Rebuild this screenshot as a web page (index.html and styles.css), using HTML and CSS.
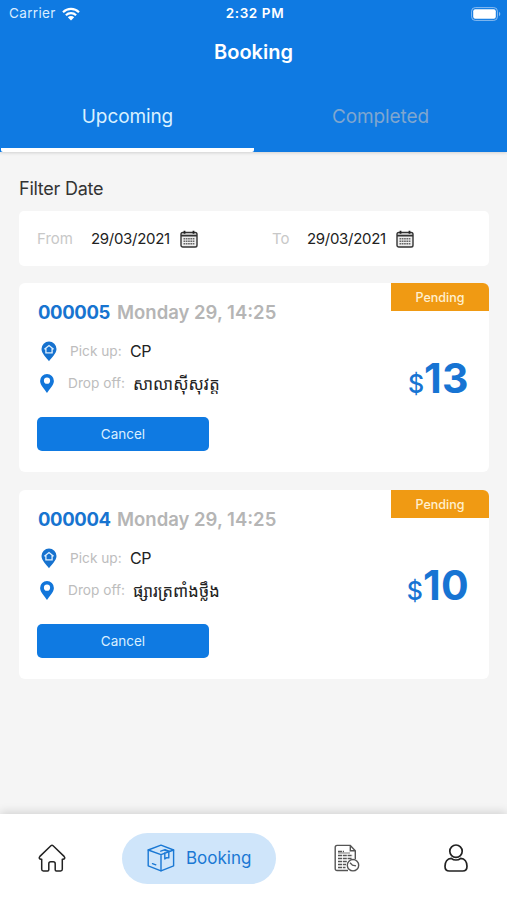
FILE: index.html
```
<!DOCTYPE html>
<html lang="en">
<head>
    <meta charset="UTF-8">
    <meta name="viewport" content="width=device-width, initial-scale=1.0">
    <title>Booking</title>
    <link rel="stylesheet" href="styles.css">
</head>
<body>
    <!-- shared icons -->
    <svg class="sprite" width="0" height="0">
        <symbol id="calendar" viewBox="0 0 18 18">
            <rect x="1" y="2.5" width="16" height="14.5" rx="1.8" fill="#eee" stroke="#333" stroke-width="1.4"/>
            <path d="M1 5.6h16" stroke="#333" stroke-width="1.8"/>
            <path d="M4.5 .8v3M13.5 .8v3" stroke="#222" stroke-width="1.8"/>
            <path d="M3.5 8.8h11M3.5 11.3h11M3.5 13.8h11" stroke="#666" stroke-width="1.4" stroke-dasharray="1.7 .6"/>
        </symbol>
        <symbol id="pin-home" viewBox="0 0 16 21">
            <path d="M8 .5A7.5 7.5 0 0 1 15.5 8c0 4.6-5.4 9.3-7.5 12.3C5.9 17.3.5 12.6.5 8A7.5 7.5 0 0 1 8 .5z" fill="#1672cf"/>
            <path d="M3.4 8.3L8 4.5l4.6 3.8M4.9 7.500v4.300h6.200V7.500" fill="none" stroke="#dff0ff" stroke-width="1.3"/>
        </symbol>
        <symbol id="pin" viewBox="0 0 14 19">
            <path d="M7 0a6.900 6.900 0 0 1 6.900 6.900C13.900 11 9 15.500 7 19 5 15.500.1 11 .1 6.900A6.900 6.900 0 0 1 7 0z" fill="#1276da"/>
            <circle cx="7" cy="6.7" r="3.1" fill="#fff"/>
        </symbol>
    </svg>

    <header class="header">
        <div class="status">
            <div class="carrier">
                <span>Carrier</span>
                <svg class="wifi" viewBox="0 0 18 14">
                    <path d="M1 5.200a11.500 11.500 0 0 1 16 0M3.900 8.200a7.300 7.300 0 0 1 10.200 0" fill="none" stroke="#fff" stroke-width="2.2"/>
                    <path d="M9 13.600l-3.200-3.400a4.600 4.600 0 0 1 6.400 0z" fill="#fff"/>
                </svg>
            </div>
            <div class="time">2:32 PM</div>
            <svg class="battery" viewBox="0 0 30 14">
                <rect x=".6" y=".6" width="25.8" height="12.8" rx="3.6" fill="none" stroke="#8abcf0" stroke-width="1"/>
                <rect x="2.2" y="2.2" width="22.6" height="9.6" rx="2" fill="#fff"/>
                <path d="M28 4.800v4.400c1.800-.8 1.800-3.600 0-4.400z" fill="#8abcf0"/>
            </svg>
        </div>
        <h1>Booking</h1>
        <div class="tabs">
            <div class="tab active"><span>Upcoming</span></div>
            <div class="tab"><span>Completed</span></div>
        </div>
    </header>

    <main class="content">
        <h2>Filter Date</h2>
        <div class="filter">
            <div class="field from">
                <label>From</label>
                <span>29/03/2021</span>
                <svg class="calendar"><use href="#calendar"/></svg>
            </div>
            <div class="field to">
                <label>To</label>
                <span>29/03/2021</span>
                <svg class="calendar"><use href="#calendar"/></svg>
            </div>
        </div>

        <div class="card">
            <div class="badge">Pending</div>
            <div class="card-title"><b>000005</b><span>Monday 29, 14:25</span></div>
            <div class="card-body">
                <div class="places">
                    <div class="place pickup">
                        <svg class="pin-home"><use href="#pin-home"/></svg>
                        <label>Pick up:</label>
                        <span>CP</span>
                    </div>
                    <div class="place dropoff">
                        <svg class="pin"><use href="#pin"/></svg>
                        <label>Drop off:</label>
                        <span class="khmer" lang="km">សាលាស៊ីសុវត្ត</span>
                    </div>
                </div>
                <div class="price"><small>$</small>13</div>
            </div>
            <button type="button" class="cancel">Cancel</button>
        </div>

        <div class="card">
            <div class="badge">Pending</div>
            <div class="card-title"><b>000004</b><span>Monday 29, 14:25</span></div>
            <div class="card-body">
                <div class="places">
                    <div class="place pickup">
                        <svg class="pin-home"><use href="#pin-home"/></svg>
                        <label>Pick up:</label>
                        <span>CP</span>
                    </div>
                    <div class="place dropoff">
                        <svg class="pin"><use href="#pin"/></svg>
                        <label>Drop off:</label>
                        <span class="khmer" lang="km">ផ្សារត្រពាំងថ្លឹង</span>
                    </div>
                </div>
                <div class="price"><small>$</small>10</div>
            </div>
            <button type="button" class="cancel">Cancel</button>
        </div>
    </main>

    <nav class="navbar">
        <a class="nav-item">
            <svg width="28" height="28" viewBox="0 0 28 28" fill="none" stroke="#222" stroke-width="1.5" stroke-linejoin="round">
                <path d="M12.900 1.700a1.600 1.600 0 0 1 2.200 0l11 10.700c1.300 1.400.4 2.800-1.100 2.800h-.7v10c0 1.100-.7 1.700-1.700 1.700h-4.200c-.8 0-1.200-.5-1.200-1.200v-6c0-1.300-.8-2-2-2h-2.400c-1.200 0-2 .7-2 2v6c0 .7-.4 1.200-1.200 1.200H5.400c-1 0-1.700-.6-1.700-1.700v-10H3c-1.500 0-2.400-1.400-1.100-2.800z"/>
            </svg>
        </a>
        <a class="nav-item selected">
            <svg width="28" height="28" viewBox="0 0 28 28" fill="none" stroke="#1a78d4" stroke-width="1.4" stroke-linejoin="round" stroke-linecap="round">
                <path d="M1.200 6L14 1.200 26.600 6v15.800L14 26.800 1.200 21.800z"/>
                <path d="M1.200 6L14 10.600 26.600 6M14 10.600v16.200M5.500 19.600l3.300 1.200"/>
                <path d="M13.800 7.200l4.200-1.500 4.800 1.700M17.800 9v6l2-1.400 2 .3V7.700l-4.500-1.600"/>
            </svg>
            <span>Booking</span>
        </a>
        <a class="nav-item">
            <svg width="26" height="28" viewBox="0 0 26 28" fill="none" stroke="#555" stroke-width="1.4">
                <path d="M14 26.500H3a1.800 1.800 0 0 1-1.800-1.800V3.200A1.800 1.800 0 0 1 3 1.400h13.300l5 5.300v8.300M16.300 1.400v5.300h5"/>
                <path d="M4 7.500h6M4 11.500h14.500M4 14.500h14M4 17.500h9M4 20.500h8M4 23.500h7.500" stroke-width="1.5" stroke-dasharray="4 .8"/>
                <path d="M4 9h12" stroke-width=".8"/>
                <circle cx="19" cy="21.2" r="5.7" fill="#fff"/>
                <path d="M16 18.800l2.500 2.400 3.500.7"/>
            </svg>
        </a>
        <a class="nav-item profile">
            <svg width="24" height="28" viewBox="0 0 24 28" fill="none" stroke="#222" stroke-width="1.7">
                <circle cx="12" cy="7.2" r="6.2"/>
                <path d="M7.300 14.300C3.300 14.500 1 17.800 1 22.200 1 25.300 2.600 27 5.300 27h13.400c2.700 0 4.300-1.700 4.300-4.800 0-4.400-2.300-7.700-6.300-7.900-2.700 2.200-6.700 2.200-9.400 0z"/>
            </svg>
        </a>
    </nav>
</body>
</html>
```

FILE: styles.css
```
* {
    box-sizing: border-box;
}
body {
    margin: 0;
    height: 900px;
    display: flex;
    flex-direction: column;
    overflow: hidden;
    background: #f5f5f5;
    color: #222;
    font-family: Inter, "Noto Sans", sans-serif;
}
svg {
    display: block;
    flex: none;
}
.sprite {
    position: absolute;
}

/* header */
.header {
    height: 152px;
    background: #0f7ae2;
    color: #fff;
    box-shadow: 0 1px 3px rgba(0, 0, 0, 0.15);
}
.status {
    display: grid;
    grid-template-columns: 1fr auto 1fr;
    align-items: center;
    height: 27px;
    padding: 0 6px 0 9px;
    line-height: 27px;
}
.carrier {
    display: flex;
    align-items: center;
    gap: 6px;
    color: #d9ecff;
    font-size: 13.5px;
    letter-spacing: 0.35px;
}
.wifi {
    width: 18px;
    height: 14px;
}
.time {
    font-weight: 600;
    font-size: 13.5px;
    letter-spacing: 0.6px;
}
.battery {
    width: 30px;
    height: 14px;
    justify-self: end;
}
h1 {
    margin: 0;
    height: 52px;
    text-align: center;
    font-size: 20px;
    font-weight: 600;
    line-height: 51px;
}
.tabs {
    display: flex;
    height: 73px;
}
.tab {
    flex: 1;
    text-align: center;
    font-size: 19px;
    letter-spacing: -0.1px;
    line-height: 75px;
    color: #7fa6cf;
}
.tab.active {
    margin-left: 1px;
    color: #d9f1ff;
    border-bottom: 4px solid #fff;
    border-radius: 2px;
}

/* content */
.content {
    flex: 1;
    padding: 24px 18px 0 19px;
}
h2 {
    margin: 0 0 10px;
    font-size: 18px;
    font-weight: 400;
    letter-spacing: -0.25px;
    line-height: 25px;
    color: #333;
}
.filter {
    display: flex;
    height: 55px;
    margin-bottom: 17px;
    padding-left: 18px;
    background: #fff;
    border-radius: 5px;
}
.field {
    display: flex;
    align-items: center;
    font-size: 15px;
}
.from {
    width: 235px;
}
.field label {
    color: #c8c8c8;
}
.from label {
    width: 54px;
}
.to label {
    width: 35px;
}
.field span {
    width: 89px;
    letter-spacing: -0.3px;
    white-space: nowrap;
}
.calendar {
    width: 18px;
    height: 18px;
}

.card {
    position: relative;
    height: 189px;
    margin-bottom: 18px;
    padding: 16px 20px 0 18px;
    background: #fff;
    border-radius: 6px;
}
.badge {
    position: absolute;
    top: 0;
    right: 0;
    width: 98px;
    height: 28px;
    border-radius: 0 6px 0 0;
    background: #f09a13;
    color: #fff0cf;
    text-align: center;
    font-size: 12.5px;
    font-weight: 500;
    line-height: 29px;
}
.card-title {
    display: flex;
    gap: 7px;
    height: 27px;
    padding-left: 1px;
    font-size: 18.5px;
    font-weight: 600;
    line-height: 26px;
    color: #b5b5b5;
}
.card-title b {
    width: 72px;
    font-weight: 700;
    letter-spacing: -0.35px;
    color: #1774d0;
}
.card-body {
    display: flex;
    justify-content: space-between;
    align-items: center;
    height: 92px;
    margin-bottom: -1px;
}
.places {
    padding-bottom: 10px;
}
.place {
    display: flex;
    align-items: center;
    height: 32px;
    font-size: 13.7px;
}
.place label {
    color: #bdbdbd;
}
.pin-home {
    width: 16px;
    height: 21px;
    margin: 0 13px 0 4px;
}
.pin {
    width: 14px;
    height: 19px;
    margin: 0 14px 0 3px;
}
.pickup label {
    width: 60px;
}
.dropoff label {
    width: 65px;
}
.pickup span {
    font-size: 16px;
    letter-spacing: -0.4px;
}
.khmer {
    font-family: "Noto Sans Khmer", "Noto Sans", sans-serif;
    font-size: 16.5px;
    white-space: nowrap;
}
.price {
    padding-top: 12px;
    font-size: 41px;
    font-weight: 700;
    letter-spacing: 0.4px;
    color: #1774d3;
}
.price small {
    font-size: 25px;
    font-weight: 500;
    letter-spacing: 0;
}
.cancel {
    display: block;
    width: 172px;
    height: 34px;
    padding: 0;
    border: none;
    border-radius: 5px;
    background: #0f7ae2;
    color: #d9efff;
    font-family: inherit;
    font-size: 13.5px;
    line-height: 34px;
    cursor: pointer;
}

/* bottom navigation */
.navbar {
    display: flex;
    align-items: center;
    height: 86px;
    padding: 2px 39px 0 38px;
    background: #fff;
    box-shadow: 0 -2px 9px rgba(0, 0, 0, 0.14);
}
.selected {
    display: flex;
    align-items: center;
    gap: 11px;
    width: 154px;
    height: 51px;
    margin: 0 58px 0 56px;
    padding-left: 25px;
    border-radius: 26px;
    background: #cfe5fa;
    color: #1a78d4;
    font-size: 17px;
}
.profile {
    margin-left: auto;
}
```
